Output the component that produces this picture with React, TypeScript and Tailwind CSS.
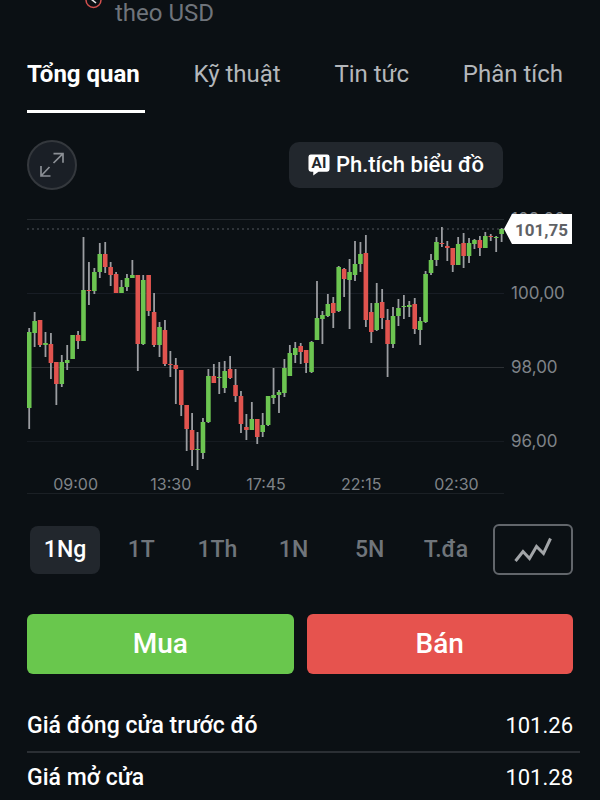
import React, { useState } from 'react';

type Candle = [high: number, top: number, bottom: number, low: number, up: 0 | 1];

const STEP = 5.43;

// 15 minute candles, already mapped to the chart's y axis
const CANDLES: Candle[] = [
    [328, 332, 408, 429, 1], [312, 321, 333, 347, 1], [320, 320, 345, 347, 0], [332, 343, 345, 357, 1],
    [333, 344, 363, 379, 0], [362, 362, 384, 405, 0], [355, 362, 384, 387, 1], [345, 360, 363, 370, 1],
    [335, 335, 359, 359, 1], [331, 335, 341, 349, 0], [237, 290, 341, 341, 1], [262, 290, 291, 305, 0],
    [268, 272, 291, 294, 1], [243, 254, 272, 278, 1], [242, 254, 267, 273, 0], [262, 267, 275, 286, 0],
    [272, 274, 293, 293, 0], [280, 287, 293, 293, 1], [274, 278, 287, 291, 1], [260, 275, 278, 278, 1],
    [275, 275, 344, 371, 0], [275, 280, 344, 345, 1], [275, 275, 311, 316, 0], [293, 312, 345, 347, 0],
    [322, 327, 345, 357, 1], [320, 330, 364, 366, 0], [351, 364, 365, 377, 0], [358, 365, 369, 404, 0],
    [370, 370, 405, 416, 0], [405, 405, 429, 451, 0], [413, 430, 450, 466, 0], [432, 449, 450, 470, 1],
    [418, 422, 453, 459, 1], [369, 376, 422, 423, 1], [364, 376, 383, 383, 0], [362, 377, 378, 394, 1],
    [361, 371, 388, 393, 1], [356, 369, 378, 379, 0], [369, 385, 396, 402, 0], [391, 396, 424, 433, 0],
    [414, 427, 430, 440, 0], [402, 419, 430, 430, 1], [419, 419, 437, 444, 0], [413, 425, 432, 437, 1],
    [396, 396, 425, 426, 1], [368, 395, 398, 404, 1], [390, 392, 395, 413, 1], [359, 368, 393, 397, 1],
    [345, 353, 376, 376, 1], [342, 348, 355, 363, 1], [343, 346, 352, 364, 0], [350, 350, 363, 373, 0],
    [341, 342, 372, 373, 1], [281, 318, 340, 340, 1], [311, 315, 319, 344, 1], [294, 304, 316, 317, 1],
    [297, 303, 313, 328, 0], [266, 267, 311, 312, 1], [268, 269, 279, 297, 0], [259, 272, 280, 329, 1],
    [241, 264, 275, 281, 1], [242, 254, 264, 272, 1], [235, 253, 320, 327, 0], [303, 312, 332, 343, 0],
    [283, 303, 330, 331, 1], [289, 302, 318, 329, 0], [309, 320, 344, 377, 0], [307, 316, 344, 348, 1],
    [299, 308, 316, 326, 1], [295, 306, 307, 319, 1], [301, 305, 307, 317, 1], [298, 304, 329, 334, 0],
    [317, 321, 330, 345, 1], [271, 274, 322, 323, 1], [254, 260, 273, 275, 1], [237, 242, 260, 266, 1],
    [227, 243, 244, 247, 0], [241, 246, 248, 261, 0], [248, 248, 265, 272, 0], [237, 244, 265, 265, 1],
    [233, 243, 256, 268, 0], [238, 243, 256, 263, 1], [239, 240, 244, 249, 1], [236, 240, 248, 256, 0],
    [232, 236, 248, 248, 1], [234, 236, 237, 241, 0], [236, 237, 238, 252, 1], [228, 229, 234, 242, 1],
];

const TABS = ['Tổng quan', 'Kỹ thuật', 'Tin tức', 'Phân tích'];
const RANGES = ['1Ng', '1T', '1Th', '1N', '5N', 'T.đa'];
const PRICES = ['102,00', '100,00', '98,00', '96,00'];
const TIMES = ['09:00', '13:30', '17:45', '22:15', '02:30'];

const STATS = [
    { label: 'Giá đóng cửa trước đó', value: '101.26' },
    { label: 'Giá mở cửa', value: '101.28' },
];

const CandleChart = () => (
    <svg
        viewBox="27 210 477 264"
        preserveAspectRatio="none"
        className="block h-[264px] w-full"
        role="img"
        aria-label="101,75"
    >
        <g strokeWidth="1">
            <path d="M27 219.5H504" stroke="#24292e" />
            <path d="M27 293.5H504" stroke="#181d25" />
            <path d="M27 367.5H504" stroke="#2c3034" />
            <path d="M27 441.5H504" stroke="#161b21" />
            <path d="M27 229H504" stroke="#2f3439" strokeWidth="2" strokeDasharray="2 3" />
        </g>
        {CANDLES.map(([high, top, bottom, low, up], i) => {
            const x = 29.2 + i * STEP;

            return (
                <g key={i}>
                    <path d={`M${x} ${high}V${low}`} stroke="#9b9da1" strokeWidth="1.8" />
                    <rect
                        x={x - 2.3}
                        y={top}
                        width="4.6"
                        height={Math.max(bottom - top, 1)}
                        fill={up ? '#6cc551' : '#e1544f'}
                    />
                </g>
            );
        })}
    </svg>
);

const App = () => {
    const [tab, setTab] = useState(TABS[0]);
    const [range, setRange] = useState(RANGES[0]);

    return (
        <div className="min-h-screen bg-[#0b1014] font-[Roboto,sans-serif] text-[22px] leading-[26px] text-white">
            <header className="flex items-start gap-[13px] pl-[85px] text-[#6f747b]">
                <svg width="17" height="9" viewBox="0 0 17 9" fill="none" aria-hidden="true">
                    <circle cx="8.5" cy="0" r="7.5" stroke="#d2504e" strokeWidth="1.5" />
                    <path d="M6 -1L11 3" stroke="#e4e6e8" strokeWidth="1.6" />
                </svg>
                <p className="text-[24px] leading-[26px]">theo USD</p>
            </header>

            <nav className="flex justify-between pt-[35px] pr-8 pl-[27px] text-[24px] leading-[26px]">
                {TABS.map((name) => (
                    <button
                        key={name}
                        type="button"
                        onClick={() => setTab(name)}
                        className={name === tab
                            ? 'border-b-3 border-white pr-[5px] pb-[23px] font-bold'
                            : 'border-b-3 border-transparent pr-[5px] pb-[23px] text-[#b4b7bb]'}
                    >
                        {name}
                    </button>
                ))}
            </nav>

            <main>
                <div className="flex items-center justify-between pt-[27px] pr-[97px] pl-[27px]">
                    <button
                        type="button"
                        aria-label="Toàn màn hình"
                        className="flex size-[50px] items-center justify-center rounded-full border-2 border-[#34383d] bg-[#1a1f26]"
                    >
                        <svg width="26" height="26" viewBox="0 0 26 26" fill="none" stroke="#8b8f95" strokeWidth="1.7">
                            <path d="M14.500 11L24 1.700M14.500 1.700H24V10.700" />
                            <path d="M10.500 15L2 24M2 14V24H11.500" />
                        </svg>
                    </button>
                    <button
                        type="button"
                        className="flex h-[46px] items-center gap-1.5 rounded-[10px] bg-[#22272d] px-[19px] font-medium"
                    >
                        <svg width="22" height="22" viewBox="0 0 23 22" aria-hidden="true">
                            <path d="M3 0H20A2.500 2.500 0 0 1 22.500 2.500V15.500A2.500 2.500 0 0 1 20 18H11L5.500 22V18H3A2.500 2.500 0 0 1 .5 15.500V2.500A2.500 2.500 0 0 1 3 0Z" fill="#fff" />
                            <text x="11.500" y="14.500" textAnchor="middle" fontSize="16" fontWeight="700" fill="#22272d">AI</text>
                        </svg>
                        Ph.tích biểu đồ
                    </button>
                </div>

                <section className="flex px-[27px] pt-5 font-[Inter,sans-serif] text-base leading-[18px] text-[#7f8388]">
                    <div className="min-w-0 flex-1">
                        <CandleChart />
                        <div className="grid grid-cols-5 border-b border-[#1b2025] pt-px pl-px text-center">
                            {TIMES.map((time) => <span key={time}>{time}</span>)}
                        </div>
                    </div>
                    <div className="relative flex w-[69px] flex-col gap-14 pl-[7px] text-[17px] leading-[18px]">
                        {PRICES.map((price) => <span key={price}>{price}</span>)}
                        <div className="absolute top-1 left-0 flex h-[30px] w-[68px] items-center justify-end bg-white pt-0.5 pr-1 font-[Roboto,sans-serif] font-bold text-[#5f6266] [clip-path:polygon(0_50%,8px_0,100%_0,100%_100%,8px_100%)]">
                            101,75
                        </div>
                    </div>
                </section>

                <div className="flex gap-[9px] px-[27px] pt-[30px]">
                    <div className="grid flex-1 grid-cols-6 items-center justify-items-center">
                        {RANGES.map((name) => (
                            <button
                                key={name}
                                type="button"
                                onClick={() => setRange(name)}
                                className={name === range
                                    ? 'h-12 w-[70px] rounded-lg bg-[#22272d] text-[23px] font-medium'
                                    : 'h-12 w-[70px] rounded-lg text-[23px] font-medium text-[#70757b]'}
                            >
                                {name}
                            </button>
                        ))}
                    </div>
                    <button
                        type="button"
                        aria-label="Loại biểu đồ"
                        className="flex h-[51px] w-20 items-center justify-center rounded-md border-2 border-[#62666b]"
                    >
                        <svg width="38" height="26" viewBox="0 0 38 26" fill="none" stroke="#a2a5a8" strokeWidth="3">
                            <path d="M1.500 24L9 14.500L15.500 21.500L22.500 9.500L29.500 16.500L36.500 1.500" />
                        </svg>
                    </button>
                </div>

                <div className="grid grid-cols-2 gap-[13px] px-[27px] pt-[39px] text-[28px] font-medium">
                    <button type="button" className="h-[60px] rounded-md bg-[#69c74d]">Mua</button>
                    <button type="button" className="h-[60px] rounded-md bg-[#e6534e]">Bán</button>
                </div>

                <div className="pt-[26px] pr-5 pl-[27px]">
                    <table className="w-full">
                        <tbody>
                            {STATS.map(({ label, value }) => (
                                <tr key={label} className="h-[52px] border-b-2 border-[#2b2f34]">
                                    <th scope="row" className="text-left text-[23px] font-medium">{label}</th>
                                    <td className="pr-[7px] text-right">{value}</td>
                                </tr>
                            ))}
                        </tbody>
                    </table>
                </div>
            </main>
        </div>
    );
};

export default App;
